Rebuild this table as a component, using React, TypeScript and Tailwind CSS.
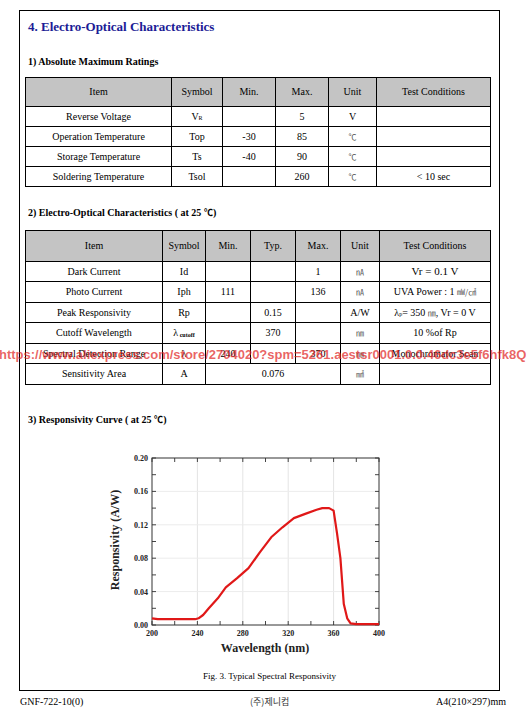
import React from 'react';

const serif = "font-['Liberation_Serif','Noto_Sans_CJK_KR',serif]";

// responsivity curve, (wavelength nm, A/W)
const curve: [number, number][] = [
  [200, 0.008], [205, 0.007], [220, 0.007], [238, 0.007], [241, 0.008],
  [245, 0.012], [250, 0.02], [258, 0.032], [265, 0.045], [275, 0.056],
  [285, 0.068], [295, 0.087], [305, 0.105], [315, 0.117], [325, 0.128],
  [335, 0.133], [345, 0.138], [350, 0.14], [356, 0.14], [360, 0.137],
  [363, 0.11], [366, 0.08], [369, 0.025], [372, 0.008], [375, 0.002],
  [380, 0.001], [400, 0.001],
];

const px = (w: number) => 52 + ((w - 200) / 200) * 227;
const py = (r: number) => 180 - (r / 0.2) * 167;

function Unit({ children }: { children: React.ReactNode }) {
  return (
    <span className="font-['Noto_Sans_CJK_KR',sans-serif] text-[8px] text-[#555]">
      {children}
    </span>
  );
}

function Cell({
  children,
  head,
  className = '',
}: {
  children?: React.ReactNode;
  head?: boolean;
  className?: string;
}) {
  return (
    <div
      className={`flex items-center justify-center whitespace-nowrap text-[10px] leading-none ${
        head ? 'bg-[#c4c4c4]' : 'bg-white'
      } ${className}`}
    >
      {children}
    </div>
  );
}

function Chart() {
  const points = curve.map(([w, r]) => `${px(w).toFixed(1)},${py(r).toFixed(1)}`).join(' ');
  const xTicks = [200, 220, 240, 260, 280, 300, 320, 340, 360, 380, 400];
  const yTicks = [0, 0.02, 0.04, 0.06, 0.08, 0.1, 0.12, 0.14, 0.16, 0.18, 0.2];
  return (
    <svg width="300" height="215" viewBox="0 0 300 215" className="block">
      {[240, 280, 320, 360].map((w) => (
        <line key={w} x1={px(w)} x2={px(w)} y1={13} y2={180} stroke="#e4e4e4" strokeWidth="1" />
      ))}
      {[0.04, 0.08, 0.12, 0.16].map((r) => (
        <line key={r} x1={52} x2={279} y1={py(r)} y2={py(r)} stroke="#ececec" strokeWidth="1" />
      ))}
      {xTicks.map((w) => (
        <g key={w} stroke="#444" strokeWidth="1">
          <line x1={px(w)} x2={px(w)} y1={180} y2={176} />
          <line x1={px(w)} x2={px(w)} y1={13} y2={17} />
        </g>
      ))}
      {yTicks.map((r) => (
        <g key={r} stroke="#444" strokeWidth="1">
          <line x1={52} x2={56} y1={py(r)} y2={py(r)} />
          <line x1={279} x2={275} y1={py(r)} y2={py(r)} />
        </g>
      ))}
      <rect x="52" y="13" width="227" height="167" fill="none" stroke="#333" strokeWidth="1" />
      <polyline points={points} fill="none" stroke="#e01818" strokeWidth="2.2" strokeLinejoin="round" />
      <g fontFamily="Liberation Serif, serif" fontWeight="bold" fontSize="8" fill="#222">
        {[0, 0.04, 0.08, 0.12, 0.16, 0.2].map((r) => (
          <text key={r} x={48} y={py(r) + 3} textAnchor="end">
            {r.toFixed(2)}
          </text>
        ))}
        {[200, 240, 280, 320, 360, 400].map((w) => (
          <text key={w} x={px(w)} y={191} textAnchor="middle">
            {w}
          </text>
        ))}
      </g>
      <text
        x={0}
        y={0}
        transform="translate(19 95) rotate(-90)"
        textAnchor="middle"
        fontFamily="Liberation Serif, serif"
        fontWeight="bold"
        fontSize="12"
        fill="#222"
      >
        Responsivity (A/W)
      </text>
      <text
        x={165}
        y={207}
        textAnchor="middle"
        fontFamily="Liberation Serif, serif"
        fontWeight="bold"
        fontSize="12"
        fill="#222"
      >
        Wavelength (nm)
      </text>
    </svg>
  );
}

export default function App() {
  return (
    <div className={`relative w-[529px] h-[717px] overflow-hidden bg-white text-black ${serif}`}>
      <div className="ml-[19px] mt-[10px] w-[481px] h-[681px] border border-black flex flex-col">
        <h1 className="ml-[8px] mt-[8px] text-[13px] leading-[16px] font-bold text-[#1c1c96]">
          4. Electro-Optical Characteristics
        </h1>

        <h2 className="ml-[8px] mt-[20px] text-[10px] leading-[14px] font-bold">
          1) Absolute Maximum Ratings
        </h2>
        <div className="ml-[5px] mt-[8px] w-[466px] grid grid-cols-[145px_50px_52px_52px_47px_113px] grid-rows-[28px_19px_19px_19px_19px] gap-px bg-black p-px">
          <Cell head>Item</Cell>
          <Cell head>Symbol</Cell>
          <Cell head>Min.</Cell>
          <Cell head>Max.</Cell>
          <Cell head>Unit</Cell>
          <Cell head>Test Conditions</Cell>

          <Cell>Reverse Voltage</Cell>
          <Cell>
            V<sub className="text-[6px]">R</sub>
          </Cell>
          <Cell />
          <Cell>5</Cell>
          <Cell>V</Cell>
          <Cell />

          <Cell>Operation Temperature</Cell>
          <Cell>Top</Cell>
          <Cell>-30</Cell>
          <Cell>85</Cell>
          <Cell><Unit>℃</Unit></Cell>
          <Cell />

          <Cell>Storage Temperature</Cell>
          <Cell>Ts</Cell>
          <Cell>-40</Cell>
          <Cell>90</Cell>
          <Cell><Unit>℃</Unit></Cell>
          <Cell />

          <Cell>Soldering Temperature</Cell>
          <Cell>Tsol</Cell>
          <Cell />
          <Cell>260</Cell>
          <Cell><Unit>℃</Unit></Cell>
          <Cell>&lt; 10 sec</Cell>
        </div>

        <h2 className="ml-[8px] mt-[19px] text-[10px] leading-[14px] font-bold">
          2) Electro-Optical Characteristics ( at 25 <span className="font-['Noto_Sans_CJK_KR',sans-serif] text-[9px]">℃</span>)
        </h2>
        <div className="ml-[5px] mt-[10px] w-[466px] grid grid-cols-[136px_42px_44px_44px_44px_38px_110px] grid-rows-[30px_19px_20px_19px_20px_19px_20px] gap-px bg-black p-px">
          <Cell head>Item</Cell>
          <Cell head>Symbol</Cell>
          <Cell head>Min.</Cell>
          <Cell head>Typ.</Cell>
          <Cell head>Max.</Cell>
          <Cell head>Unit</Cell>
          <Cell head>Test Conditions</Cell>

          <Cell>Dark Current</Cell>
          <Cell>Id</Cell>
          <Cell />
          <Cell />
          <Cell>1</Cell>
          <Cell><Unit>㎁</Unit></Cell>
          <Cell className="text-[11px]">Vr = 0.1 V</Cell>

          <Cell>Photo Current</Cell>
          <Cell>Iph</Cell>
          <Cell>111</Cell>
          <Cell />
          <Cell>136</Cell>
          <Cell><Unit>㎁</Unit></Cell>
          <Cell className="text-[9px]">
            UVA Power : 1&nbsp;<Unit>㎽/㎠</Unit>
          </Cell>

          <Cell>Peak Responsivity</Cell>
          <Cell>Rp</Cell>
          <Cell />
          <Cell>0.15</Cell>
          <Cell />
          <Cell className="text-[8px]">A/W</Cell>
          <Cell>
            λ<sub className="text-[6px]">p</sub>= 350&nbsp;<Unit>㎚</Unit>, Vr = 0 V
          </Cell>

          <Cell>Cutoff Wavelength</Cell>
          <Cell>
            λ<sub className="text-[6px] font-bold">&nbsp;cutoff</sub>
          </Cell>
          <Cell />
          <Cell>370</Cell>
          <Cell />
          <Cell><Unit>㎚</Unit></Cell>
          <Cell>10 %of Rp</Cell>

          <Cell>Spectral Detection Range</Cell>
          <Cell>λ</Cell>
          <Cell>240</Cell>
          <Cell />
          <Cell>370</Cell>
          <Cell><Unit>㎚</Unit></Cell>
          <Cell>Monochromator Scan</Cell>

          <Cell>Sensitivity Area</Cell>
          <Cell>A</Cell>
          <Cell className="col-span-3">0.076</Cell>
          <Cell><Unit>㎟</Unit></Cell>
          <Cell />
        </div>

        <h2 className="ml-[8px] mt-[28px] text-[10px] leading-[14px] font-bold">
          3) Responsivity Curve ( at 25 <span className="font-['Noto_Sans_CJK_KR',sans-serif] text-[9px]">℃</span>)
        </h2>
        <div className="ml-[80px] mt-[18px]">
          <Chart />
        </div>
        <p className="mt-[10px] text-center text-[9px] leading-[12px] pl-[20px]">
          Fig. 3. Typical Spectral Responsivity
        </p>
      </div>

      <div className="ml-[20px] mr-[23px] mt-[5px] flex items-center justify-between text-[10px] leading-[12px]">
        <span>GNF-722-10(0)</span>
        <span className="font-['Noto_Sans_CJK_KR',sans-serif] text-[9px] text-[#333] ml-[20px]">(주)제니컴</span>
        <span>A4(210×297)mm</span>
      </div>

      <div className="absolute left-[-1px] top-[347px] whitespace-nowrap font-['Liberation_Sans',sans-serif] text-[13px] font-bold leading-[15px] text-[#e02020]/70">
        https://www.aliexpress.com/store/2704020?spm=5261.aestsr0001.0.0.46dc3e5f6hfk8Q
      </div>
    </div>
  );
}
